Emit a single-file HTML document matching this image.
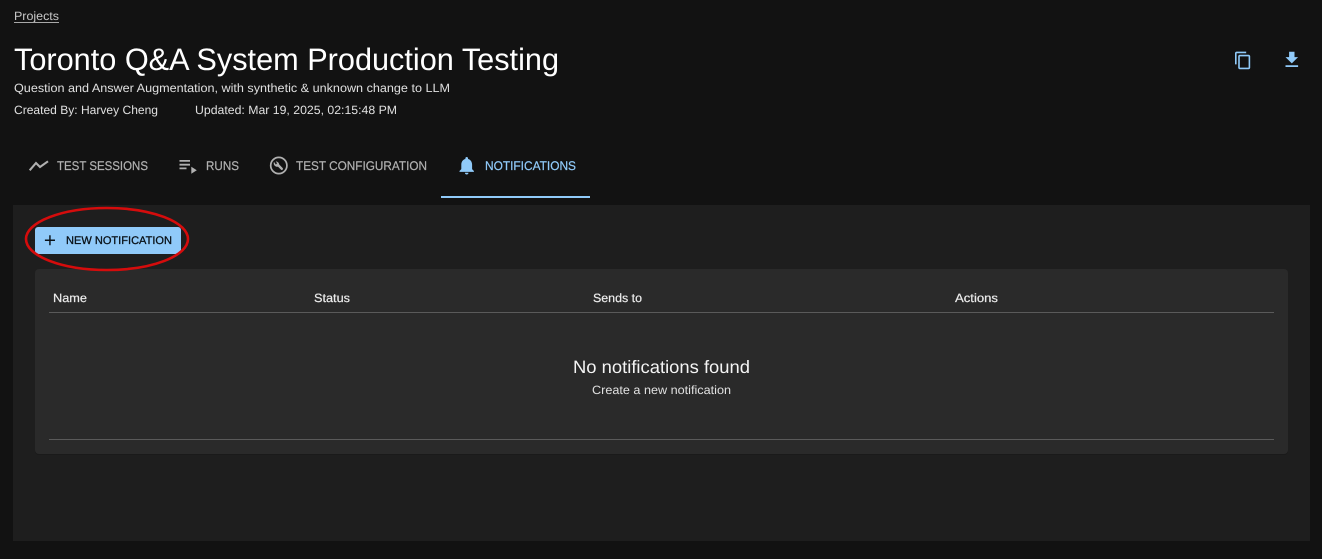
<!DOCTYPE html>
<html lang="en">
<head>
<meta charset="utf-8">
<title>Toronto Q&amp;A System Production Testing</title>
<style>
html,body{margin:0;padding:0;width:1322px;height:559px;background:#121212;overflow:hidden}
svg{display:block}
text{font-family:"Liberation Sans",sans-serif;text-rendering:geometricPrecision}
.w{fill:#e0e0e0;font-size:12px}
.tab{fill:#b0b0b0;font-size:12.5px;stroke:#b0b0b0;stroke-width:.22px}
.th{fill:#ececec;font-size:12px;stroke:#ececec;stroke-width:.2px}
</style>
</head>
<body>
<svg width="1322" height="559" viewBox="0 0 1322 559" xmlns="http://www.w3.org/2000/svg">
  <rect width="1322" height="559" fill="#121212"/>

  <text class="w" x="14" y="20" textLength="45" lengthAdjust="spacingAndGlyphs" style="fill:#c8c8c8">Projects</text>
  <rect x="14" y="22" width="45" height="1" fill="#a8a8a8"/>

  <text x="14" y="70" font-size="31" fill="#fff" textLength="545" lengthAdjust="spacingAndGlyphs">Toronto Q&amp;A System Production Testing</text>
  <text class="w" x="14" y="92" textLength="436" lengthAdjust="spacingAndGlyphs">Question and Answer Augmentation, with synthetic &amp; unknown change to LLM</text>
  <text class="w" x="14" y="114" textLength="144" lengthAdjust="spacingAndGlyphs">Created By: Harvey Cheng</text>
  <text class="w" x="195" y="114" textLength="202" lengthAdjust="spacingAndGlyphs">Updated: Mar 19, 2025, 02:15:48 PM</text>

  <g fill="#90caf9">
    <path transform="translate(1233.4 50.800) scale(.8)" d="M16 1H4c-1.1 0-2 .9-2 2v14h2V3h12V1zm3 4H8c-1.1 0-2 .9-2 2v14c0 1.1.9 2 2 2h11c1.100 0 2-.9 2-2V7c0-1.100-.9-2-2-2zm0 16H8V7h11v14z"/>
    <path transform="translate(1281 49) scale(.9)" d="M5 20h14v-2H5v2zM19 9h-4V3H9v6H5l7 7 7-7z"/>
  </g>

  <!-- tabs -->
  <path d="M29.700 170.300L36 163L40 167L48 161.300" fill="none" stroke="#b0b0b0" stroke-width="2.100" stroke-linejoin="miter"/>
  <g fill="#b0b0b0">
    <path d="M179.500 160h10.500v1.800h-10.500zM179.500 163.800h10.500v1.800h-10.500zM179.500 167.500h7v1.800h-7zM191.300 166.700v7l5.500-3.500z"/>
  </g>
  <circle cx="278.800" cy="165.500" r="8.100" fill="none" stroke="#b0b0b0" stroke-width="1.700"/>
  <path d="M281.800 168.800L277.500 164.500" fill="none" stroke="#b0b0b0" stroke-width="2.400" stroke-linecap="round"/>
  <path d="M274 161.900c-.6 1.300-.3 2.900.7 3.900 1 1 2.600 1.300 3.800.7 .9-1.200 .9-2.900-.2-4-.8-.8-1.700-1.100-2.600-1l1.500 1.900-1.300 1.200z" fill="#b0b0b0"/>
  <text class="tab" x="57" y="170" textLength="91" lengthAdjust="spacingAndGlyphs">TEST SESSIONS</text>
  <text class="tab" x="206" y="170" textLength="33" lengthAdjust="spacingAndGlyphs">RUNS</text>
  <text class="tab" x="296" y="170" textLength="131" lengthAdjust="spacingAndGlyphs">TEST CONFIGURATION</text>
  <path fill="#90caf9" transform="translate(455.900 154.750) scale(.9)" d="M12 22c1.100 0 2-.9 2-2h-4c0 1.100.89 2 2 2zm6-6v-5c0-3.070-1.640-5.640-4.500-6.320V4c0-.83-.67-1.500-1.500-1.500s-1.500.67-1.500 1.500v.68C7.630 5.360 6 7.920 6 11v5l-2 2v1h16v-1l-2-2z"/>
  <text x="485" y="170" font-size="12.500" fill="#90caf9" stroke="#90caf9" stroke-width=".22" textLength="91" lengthAdjust="spacingAndGlyphs">NOTIFICATIONS</text>
  <rect x="441" y="196" width="149" height="2" fill="#90caf9"/>

  <!-- panel -->
  <rect x="13" y="205" width="1297" height="336" fill="#1e1e1e"/>

  <!-- card -->
  <rect x="35" y="270" width="1253" height="185" rx="4" fill="#1a1a1a"/>
  <rect x="35" y="269" width="1253" height="185" rx="4" fill="#2a2a2a"/>
  <text class="th" x="53" y="302" textLength="34" lengthAdjust="spacingAndGlyphs">Name</text>
  <text class="th" x="314" y="302" textLength="36" lengthAdjust="spacingAndGlyphs">Status</text>
  <text class="th" x="593" y="302" textLength="49" lengthAdjust="spacingAndGlyphs">Sends to</text>
  <text class="th" x="955" y="302" textLength="43" lengthAdjust="spacingAndGlyphs">Actions</text>
  <rect x="49" y="312" width="1225" height="1" fill="#5a5a5a"/>
  <text x="573" y="373" font-size="18" fill="#f4f4f4" textLength="177" lengthAdjust="spacingAndGlyphs">No notifications found</text>
  <text class="w" x="592" y="394" textLength="139" lengthAdjust="spacingAndGlyphs">Create a new notification</text>
  <rect x="49" y="439" width="1225" height="1" fill="#5a5a5a"/>

  <!-- button -->
  <rect x="35" y="227" width="146" height="27" rx="3" fill="#90caf9"/>
  <path fill="#0a1218" transform="translate(41.300 231.600) scale(.72)" d="M19 13h-6v6h-2v-6H5v-2h6V5h2v6h6v2z"/>
  <text x="66" y="244" font-size="11" fill="#0a1218" stroke="#0a1218" stroke-width=".3" textLength="106" lengthAdjust="spacingAndGlyphs">NEW NOTIFICATION</text>

  <!-- annotation -->
  <ellipse cx="107" cy="239" rx="81" ry="31" fill="none" stroke="#d50c0c" stroke-width="2.600"/>
</svg>
</body>
</html>
